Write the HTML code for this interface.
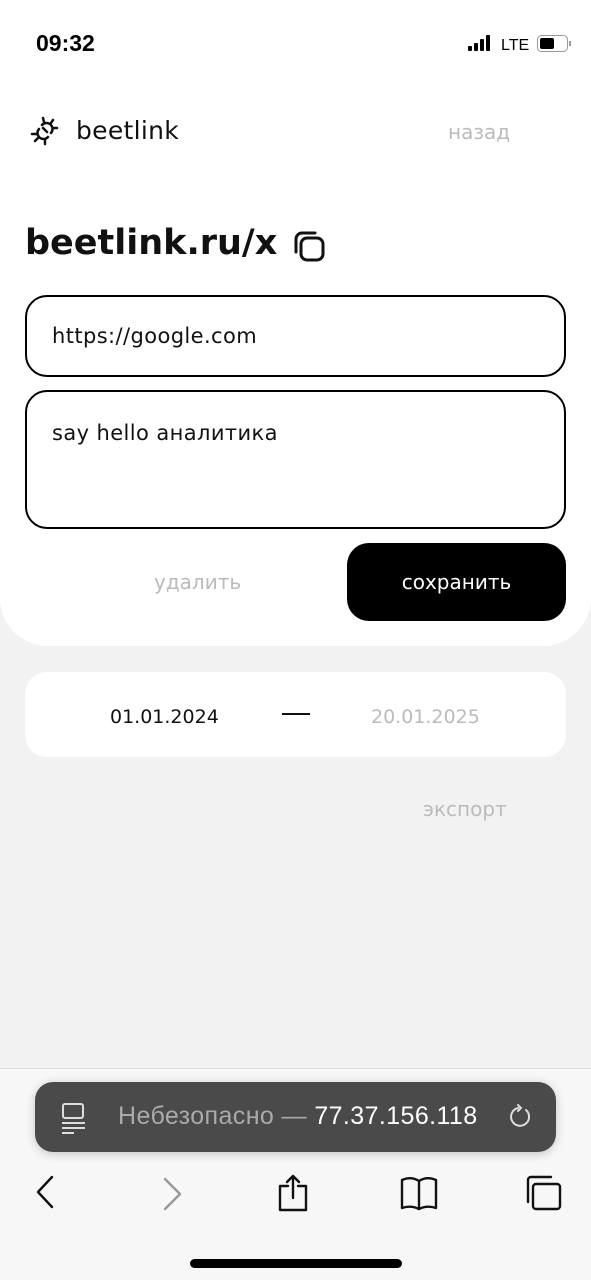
<!DOCTYPE html>
<html><head><meta charset="utf-8"><style>
*{box-sizing:border-box;margin:0;padding:0}
body{width:591px;height:1280px;background:#f2f2f2;font-family:"DejaVu Sans",sans-serif;position:relative;overflow:hidden}
.top{position:absolute;left:0;top:0;width:591px;height:646px;background:#fff;border-radius:0 0 48px 48px}
.abs{position:absolute;white-space:nowrap}
.field{position:absolute;left:25px;width:541px;border:2px solid #000;border-radius:22px;font-size:21px;letter-spacing:0.4px;color:#111;padding-left:25px}
</style></head><body>
<div class="top"></div>
<div class="abs" style="left:36px;top:30px;font-size:23px;font-weight:bold;color:#000;font-family:'Liberation Sans'">09:32</div>
<svg class="abs" style="left:468px;top:34px" width="106" height="20">
<rect x="0" y="12" width="4" height="5" rx="1"/><rect x="6" y="9" width="4" height="8" rx="1"/><rect x="12" y="5" width="4" height="12" rx="1"/><rect x="18" y="1" width="4" height="16" rx="1"/>
<text x="33" y="16" font-size="16" font-family="Liberation Sans" fill="#000">LTE</text>
<rect x="69.5" y="1.5" width="30" height="16" rx="4" fill="none" stroke="#999"/><rect x="72" y="4" width="14" height="11" rx="2"/><rect x="101" y="7" width="2" height="5" fill="#999"/>
</svg>
<svg class="abs" style="left:29px;top:116px" width="32" height="30" viewBox="0 0 32 30" fill="none" stroke="#111" stroke-width="2.5" stroke-linecap="round">
<path d="M13 9 a6 6 0 0 1 9 8 M19 21 a6 6 0 0 1 -9 -8"/><path d="M14 12 l4 4"/>
<path d="M14 2 l1 4 M24 4 l-2 3 M28 12 l-4 0 M3 18 l4 0 M6 25 l3 -3 M16 28 l0 -3"/>
</svg>
<div class="abs" style="left:76px;top:116px;font-size:25px;color:#111;letter-spacing:0.3px">beetlink</div>
<div class="abs" style="left:448px;top:120px;font-size:20px;color:#bbb">назад</div>
<div class="abs" style="left:25px;top:223px;font-size:35px;font-weight:bold;color:#111">beetlink.ru/x</div>
<svg class="abs" style="left:292px;top:229px" width="34" height="34" viewBox="0 0 34 34" fill="none" stroke="#111" stroke-width="3" stroke-linecap="round">
<rect x="9" y="9" width="22" height="22" rx="6"/><path d="M4 23 V10 a6 6 0 0 1 6 -6 H23"/>
</svg>
<div class="field" style="top:295px;height:82px;line-height:78px">https://google.com</div>
<div class="field" style="top:390px;height:139px;padding-top:29px">say hello аналитика</div>
<div class="abs" style="left:154px;top:570px;font-size:20px;color:#bbb">удалить</div>
<div class="abs" style="left:347px;top:543px;width:219px;height:78px;background:#000;border-radius:22px;color:#fff;font-size:20px;text-align:center;line-height:78px">сохранить</div>
<div class="abs" style="left:25px;top:672px;width:541px;height:85px;background:#fff;border-radius:22px"></div>
<div class="abs" style="left:110px;top:706px;font-size:19px;color:#111">01.01.2024</div>
<div class="abs" style="left:282px;top:713px;width:28px;height:2px;background:#111"></div>
<div class="abs" style="left:371px;top:706px;font-size:19px;color:#bbb">20.01.2025</div>
<div class="abs" style="left:423px;top:797px;font-size:20px;color:#bbb">экспорт</div>
<div class="abs" style="left:0;top:1068px;width:591px;height:212px;background:#f7f7f7;border-top:1px solid #ddd"></div>
<div class="abs" style="left:35px;top:1082px;width:521px;height:70px;background:#4a4a4a;border-radius:18px;box-shadow:0 2px 10px rgba(0,0,0,.2)"></div>
<svg class="abs" style="left:60px;top:1102px" width="30" height="32" fill="none" stroke="#ddd" stroke-width="2">
<rect x="3" y="2" width="20" height="14" rx="2"/><path d="M2 21 H25 M2 26 H25 M2 31 H14"/>
</svg>
<div class="abs" style="left:118px;top:1102px;font-size:25px;color:#aaa;font-family:'Liberation Sans';letter-spacing:0.4px">Небезопасно — <span style="color:#fff">77.37.156.118</span></div>
<svg class="abs" style="left:507px;top:1102px" width="30" height="30" fill="none" stroke="#ddd" stroke-width="2" stroke-linecap="round">
<path d="M19 8 a9 9 0 1 1 -8 -2 M11 3 l3 3 l-3 3"/>
</svg>
<svg class="abs" style="left:30px;top:1172px" width="540" height="40" fill="none" stroke-width="2.4" stroke-linecap="round" stroke-linejoin="round">
<path d="M22 5 L8 20 L22 35" stroke="#111"/>
<path d="M135 7 L150 22 L135 37" stroke="#999"/>
<path d="M258 14 H250 V38 H276 V14 H268 M263 26 V4 M257 10 L263 4 L269 10" stroke="#111"/>
<path d="M372 36 V8 Q381 4 389 9 Q397 4 406 8 V36 Q397 33 389 37 Q381 33 372 36 Z M389 9 V37" stroke="#111"/>
<rect x="503" y="12" width="27" height="25" rx="3" stroke="#111"/><path d="M498 30 V8 a3 3 0 0 1 3 -3 H521" stroke="#111"/>
</svg>
<div class="abs" style="left:190px;top:1259px;width:212px;height:9px;background:#000;border-radius:5px"></div>
</body></html>
